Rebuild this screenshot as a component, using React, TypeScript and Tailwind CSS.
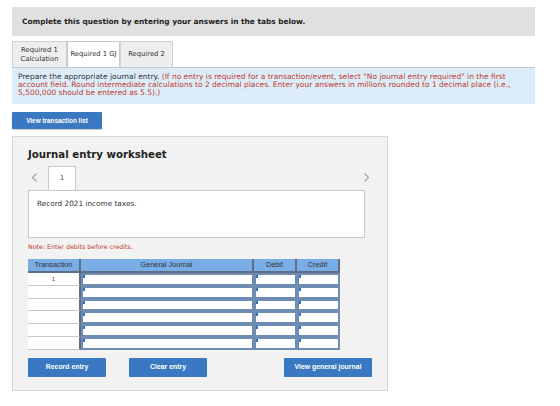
import React from 'react';

const verdana = { fontFamily: '"DejaVu Sans", Verdana, sans-serif' };
const arial = { fontFamily: '"Liberation Sans", Arial, sans-serif' };

const rows = ['1', '', '', '', '', ''];

function Cell() {
  return (
    <div className="relative h-[12.7px] border-2 border-[#6f8db3] bg-white">
      <span className="absolute left-0 top-0 h-[3px] w-[2px] bg-[#2f6fd0]" />
    </div>
  );
}

function Chevron({ dir }: { dir: 'left' | 'right' }) {
  return (
    <svg width="7" height="11" viewBox="0 0 7 11" fill="none">
      <path
        d={dir === 'left' ? 'M5.5 1.5L1.5 5.5L5.5 9.5' : 'M1.5 1.5L5.5 5.5L1.5 9.5'}
        stroke="#a0a0a0"
        strokeWidth="1.1"
      />
    </svg>
  );
}

export default function App() {
  return (
    <div className="w-[560px] h-[406px] bg-white pt-[7px] pl-[12px] pr-[25px]" style={verdana}>
      {/* header */}
      <div className="h-[29px] bg-[#e0e0e0] flex items-center pl-[10px] text-[7.4px] font-bold text-[#222]">
        Complete this question by entering your answers in the tabs below.
      </div>

      {/* tabs */}
      <div className="mt-[5px] flex h-[26px] items-end text-[6.8px] text-[#333]">
        <div className="h-[26px] w-[55px] bg-[#eeeeee] border border-[#d0d0d0] border-b-0 flex items-center justify-center text-center leading-[9px]">
          Required 1<br />Calculation
        </div>
        <div className="h-[26px] w-[53px] bg-white border border-[#c8c8c8] border-b-0 flex items-center justify-center whitespace-nowrap">
          Required 1 GJ
        </div>
        <div className="h-[26px] w-[53px] bg-[#eeeeee] border border-[#d0d0d0] border-b-0 flex items-center justify-center whitespace-nowrap">
          Required 2
        </div>
      </div>

      {/* instructions */}
      <div className="h-[37px] bg-[#dcedf9] border-t border-[#b9c9d6] px-[6px] pt-[5px] text-[7.5px] leading-[8px] text-[#333] whitespace-nowrap">
        Prepare the appropriate journal entry.{' '}
        <span className="text-[#c0392b]">
          (If no entry is required for a transaction/event, select "No journal entry required" in the first
          <br />
          account field. Round intermediate calculations to 2 decimal places. Enter your answers in millions rounded to 1 decimal place (i.e.,
          <br />
          5,500,000 should be entered as 5.5).)
        </span>
      </div>

      <button
        className="mt-[8px] h-[17px] w-[90px] bg-[#3a78c1] text-white text-[6.4px] font-bold rounded-[1px] shadow-[0_1px_1px_rgba(0,0,0,0.2)]"
        style={arial}
      >
        View transaction list
      </button>

      {/* worksheet */}
      <div className="mt-[6px] w-[376px] h-[255px] bg-[#f2f2f2] border border-[#d8d8d8] px-[15px] pt-[10px]">
        <div className="text-[10.2px] font-bold text-[#222]">Journal entry worksheet</div>

        <div className="mt-[4px] flex items-end justify-between h-[24px]">
          <div className="flex items-end">
            <span className="w-[20px] pb-[7px] pl-[3px] flex">
              <Chevron dir="left" />
            </span>
            <div className="h-[24px] w-[28px] bg-white border border-[#c8c8c8] border-b-0 flex items-center justify-center text-[6.5px] text-[#333]">
              1
            </div>
          </div>
          <span className="pb-[7px] pr-[2px] flex">
            <Chevron dir="right" />
          </span>
        </div>

        <div className="h-[48px] w-[337px] bg-white border border-[#c8c8c8] pl-[8px] pt-[8px] text-[7.3px] text-[#333]">
          Record 2021 income taxes.
        </div>

        <div className="mt-[4px] text-[6.3px] text-[#c0392b]">Note: Enter debits before credits.</div>

        {/* table */}
        <div className="mt-[8px] w-[312px] grid grid-cols-[53px_173px_43px_43px] text-[7.3px]" style={arial}>
          <div className="h-[14px] bg-[#78ade6] border-r-2 border-b-2 border-[#5f6f83] flex items-center justify-center text-[#333]">Transaction</div>
          <div className="h-[14px] bg-[#78ade6] border-r-2 border-b-2 border-[#5f6f83] flex items-center justify-center text-[#333]">General Journal</div>
          <div className="h-[14px] bg-[#78ade6] border-r-2 border-b-2 border-[#5f6f83] flex items-center justify-center text-[#333]">Debit</div>
          <div className="h-[14px] bg-[#78ade6] border-r-2 border-b-2 border-[#5f6f83] flex items-center justify-center text-[#333]">Credit</div>
          {rows.map((t, i) => (
            <React.Fragment key={i}>
              <div className="h-[12.7px] bg-white border-b border-[#c8c8c8] border-r-2 border-r-[#5f6f83] flex items-center justify-center text-[6px] text-[#555]">
                {t}
              </div>
              <Cell />
              <Cell />
              <Cell />
            </React.Fragment>
          ))}
        </div>

        {/* actions */}
        <div className="mt-[8px] flex text-[6.9px] font-bold text-white" style={arial}>
          <button className="h-[19px] w-[78px] bg-[#3a78c1] rounded-[1px]">Record entry</button>
          <button className="ml-[23px] h-[19px] w-[78px] bg-[#3a78c1] rounded-[1px]">Clear entry</button>
          <button className="ml-[77px] h-[19px] w-[88px] bg-[#3a78c1] rounded-[1px]">View general journal</button>
        </div>
      </div>
    </div>
  );
}
